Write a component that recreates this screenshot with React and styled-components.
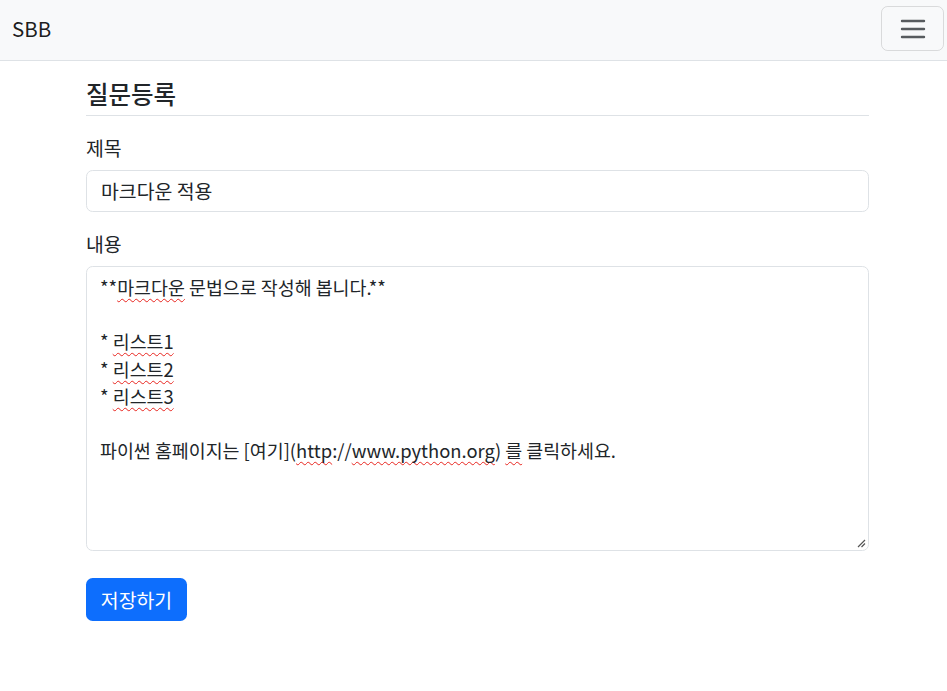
import React from "react";
import styled, { createGlobalStyle } from "styled-components";

const Global = createGlobalStyle`
  html, body { margin: 0; padding: 0; background: #fff; }
  body {
    font-family: "Noto Sans CJK KR", "Noto Sans", sans-serif;
    font-size: 19.4px;
    line-height: 26.4px;
    color: #212529;
  }
  * { box-sizing: border-box; }
`;

const Navbar = styled.nav`
  height: 61px;
  background: #f8f9fa;
  border-bottom: 1px solid #dee2e6;
  display: flex;
  align-items: center;
  justify-content: space-between;
  padding: 0 3px 0 12px;
`;

const Brand = styled.a`
  font-size: 20.5px;
  color: rgba(0, 0, 0, 0.9);
  text-decoration: none;
  line-height: 1;
  margin-top: -3px;
`;

const Toggler = styled.button`
  width: 63px;
  height: 45px;
  border: 1px solid rgba(0, 0, 0, 0.12);
  border-radius: 6.6px;
  background: transparent;
  display: flex;
  align-items: center;
  justify-content: center;
  padding: 0;
  margin-top: -3px;
`;

const Container = styled.main`
  width: 783px;
  margin-left: 86px;
`;

const Title = styled.h5`
  margin: 18px 0 0;
  font-size: 24.5px;
  font-weight: 500;
  line-height: 1.2;
  height: 37px;
  padding-top: 0;
  border-bottom: 1px solid #dee2e6;
`;

const Group = styled.div`
  margin-top: ${(p) => p.$mt || 19}px;
`;

const Label = styled.label`
  display: block;
  line-height: 26px;
  margin-bottom: 9px;
`;

const Input = styled.div`
  height: 42px;
  border: 1px solid #dee2e6;
  border-radius: 6.6px;
  padding: 0 14px;
  display: flex;
  align-items: center;
  background: #fff;
`;

const TextArea = styled.div`
  position: relative;
  height: 285px;
  border: 1px solid #dee2e6;
  border-radius: 6.6px;
  padding: 7px 13px;
  font-size: 18.4px;
  line-height: 27.2px;
  white-space: pre;
  background: #fff;
`;

const Typo = styled.span`
  text-decoration: underline wavy #e8251f;
  text-decoration-thickness: 1px;
  text-underline-offset: 3px;
  text-decoration-skip-ink: none;
`;

const Grip = styled.svg`
  position: absolute;
  right: 2px;
  bottom: 2px;
`;

const Button = styled.button`
  margin-top: 27px;
  height: 43px;
  width: 101px;
  border: none;
  border-radius: 6.6px;
  background: #0d6efd;
  color: #fff;
  font-family: inherit;
  font-size: 19.4px;
  padding: 0;
`;

export default function App() {
  return (
    <>
      <Global />
      <Navbar>
        <Brand href="#">SBB</Brand>
        <Toggler aria-label="toggle">
          <svg width="30" height="30" viewBox="0 0 30 30">
            <path
              d="M4 7h22M4 15h22M4 23h22"
              stroke="rgba(33,37,41,0.75)"
              strokeWidth="2.4"
              strokeLinecap="round"
            />
          </svg>
        </Toggler>
      </Navbar>
      <Container>
        <Title>질문등록</Title>
        <Group>
          <Label>제목</Label>
          <Input>마크다운 적용</Input>
        </Group>
        <Group>
          <Label>내용</Label>
          <TextArea role="textbox">
            {"**"}<Typo>마크다운</Typo>{" 문법으로 작성해 봅니다.**\n\n* "}
            <Typo>리스트1</Typo>{"\n* "}
            <Typo>리스트2</Typo>{"\n* "}
            <Typo>리스트3</Typo>{"\n\n파이썬 홈페이지는 [여기]("}
            <Typo>http</Typo>{"://"}<Typo>www.python.org</Typo>{") "}
            <Typo>를</Typo>{" 클릭하세요."}
            <Grip width="10" height="10" viewBox="0 0 10 10">
              <path d="M9 2L2 9M9 5.5L5.5 9" stroke="#555" strokeWidth="1.2" />
            </Grip>
          </TextArea>
        </Group>
        <Button>저장하기</Button>
      </Container>
    </>
  );
}
